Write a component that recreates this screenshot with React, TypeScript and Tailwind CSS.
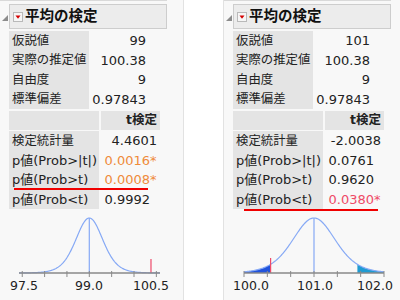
import React from "react";

type PRow = { label: string; value: string; color?: string; star?: boolean };

type ChartProps = {
    mu: number;
    x0: number;
    scale: number;
    se: number;
    axis: [number, number];
    ticks: number[];
    labels: { text: string; x: number }[];
    marker: number;
    markerTop: number;
    shade?: boolean;
};

// t density with 9 df, normalised so the peak is 1
const dens = (z: number) => Math.pow(1 + (z * z) / 9, -5);

function Chart({ mu, x0, scale, se, axis, ticks, labels, marker, markerTop, shade }: ChartProps) {
    const base = 64;
    const H = 55;
    const sigPx = scale * se;
    const yAt = (px: number) => base - H * dens((px - x0) / sigPx);
    const toPx = (v: number) => x0 + (v - mu) * scale;

    const pts: string[] = [];
    for (let px = axis[0]; px <= axis[1]; px += 0.5) {
        pts.push(`${px.toFixed(1)},${yAt(px).toFixed(2)}`);
    }

    const area = (from: number, to: number) => {
        const p: string[] = [`${from},${base}`];
        for (let px = from; px <= to; px += 0.5) p.push(`${px.toFixed(1)},${yAt(px).toFixed(2)}`);
        p.push(`${to},${base}`);
        return p.join(" ");
    };

    const mx = toPx(marker);
    const mirror = x0 + (x0 - mx);

    return (
        <svg width="176" height="91" className="block">
            {shade && (
                <>
                    <polygon points={area(axis[0], mx)} fill="#2153dc" />
                    <polygon points={area(mirror, axis[1])} fill="#1f9bd2" />
                </>
            )}
            <polyline points={pts.join(" ")} fill="none" stroke="#86a9f5" strokeWidth="1.2" />
            <line x1={x0} y1={base - H} x2={x0} y2={base} stroke="#86a9f5" strokeWidth="1.2" />
            <line x1={mx} y1={markerTop} x2={mx} y2={base} stroke="#ee4a6a" strokeWidth="1.2" />
            <line x1={axis[0]} y1={base} x2={axis[1]} y2={base} stroke="#8a8a8a" strokeWidth="1.4" />
            {ticks.map((v) => (
                <line key={v} x1={toPx(v)} y1={base - 2} x2={toPx(v)} y2={base + 4} stroke="#8a8a8a" strokeWidth="1" />
            ))}
            {labels.map((l) => (
                <text
                    key={l.text}
                    x={l.x}
                    y={81}
                    textAnchor="middle"
                    fontSize="12.5"
                    fill="#222"
                    fontFamily="'DejaVu Sans', 'Noto Sans CJK JP', sans-serif"
                >
                    {l.text}
                </text>
            ))}
        </svg>
    );
}

type PanelProps = {
    hyp: string;
    est: string;
    df: string;
    sd: string;
    tval: string;
    pRows: PRow[];
    lineTop: string;
    lineLeft: string;
    chart: ChartProps;
};

function Panel({ hyp, est, df, sd, tval, pRows, lineTop, lineLeft, chart }: PanelProps) {
    const top = [
        ["仮説値", hyp],
        ["実際の推定値", est],
        ["自由度", df],
        ["標準偏差", sd],
    ];

    return (
        <div className="relative flex flex-col">
            <div className="h-[1px] w-[167px] bg-[#d9d9d9]" />

            <div className="mt-[3px] flex h-[25px] items-center">
                <svg width="6" height="6" className="ml-[2px] mt-[2px]">
                    <polygon points="6,0 6,6 0,6" fill="#8c8c8c" />
                </svg>
                <div className="ml-[1px] flex h-[25px] w-[158px] items-center border border-[#cdcdcd] bg-[#ececec]">
                    <svg width="10" height="10" className="ml-[3px]">
                        <rect x="0.5" y="0.5" width="9" height="9" fill="#f6f6f6" stroke="#b9b9b9" />
                        <polygon points="2.5,3.5 7.5,3.5 5,6.8" fill="#d40000" />
                    </svg>
                    <span className="ml-[2px] text-[14.5px] font-bold leading-none text-[#111]">平均の検定</span>
                </div>
            </div>

            <div className="ml-[9px] mt-[2px] flex flex-col">
                {top.map(([l, v]) => (
                    <div key={l} className="flex h-[19.5px]">
                        <div className="flex w-[80px] items-center whitespace-nowrap bg-[#e4e4e4] pl-[3px] text-[12.4px]">
                            {l}
                        </div>
                        <div className="flex w-[60px] items-center justify-end pr-[3px]">{v}</div>
                    </div>
                ))}
            </div>

            <div className="ml-[9px] mt-[2px] flex h-[19px]">
                <div className="w-[90px] bg-[#e4e4e4]" />
                <div className="ml-[2px] flex w-[59px] items-center justify-end bg-[#e4e4e4] pr-[3px] text-[12.5px] font-bold">
                    t検定
                </div>
            </div>

            <div className="ml-[9px] mt-[1px] flex flex-col">
                <div className="flex h-[19.5px]">
                    <div className="flex w-[90px] items-center whitespace-nowrap bg-[#e4e4e4] pl-[3px] text-[12.4px]">
                        検定統計量
                    </div>
                    <div className="ml-[2px] flex w-[59px] items-center justify-end pr-[3px]">{tval}</div>
                </div>
                {pRows.map((r) => (
                    <div key={r.label} className="flex h-[19.5px]">
                        <div className="flex w-[90px] items-center whitespace-nowrap bg-[#e4e4e4] pl-[3px]">
                            {r.label}
                        </div>
                        <div
                            className="ml-[2px] flex w-[59px] items-center justify-end pr-[2px]"
                            style={{ color: r.color ?? "#222" }}
                        >
                            {r.value}
                            <span className="inline-block w-[8px]">{r.star ? "*" : ""}</span>
                        </div>
                    </div>
                ))}
            </div>

            <Chart {...chart} />

            <div className="absolute h-[2px] w-[134px] bg-[#f00000]" style={{ top: lineTop, left: lineLeft }} />
        </div>
    );
}

export default function App() {
    const third = [0, 1, 2, 3, 4, 5, 6].map((i) => 100 + i / 3);

    return (
        <div className="flex h-[300px] w-[400px] overflow-hidden bg-white font-['DejaVu_Sans','Noto_Sans_CJK_JP',sans-serif] text-[13px] leading-none text-[#222]">
            <div className="h-full w-[185px] border-r border-[#e2e2e2] bg-[#f8f8f8]">
                <Panel
                    hyp="99"
                    est="100.38"
                    df="9"
                    sd="0.97843"
                    tval="4.4601"
                    pRows={[
                        { label: "p値(Prob>|t|)", value: "0.0016", color: "#ef8b3b", star: true },
                        { label: "p値(Prob>t)", value: "0.0008", color: "#ef8b3b", star: true },
                        { label: "p値(Prob<t)", value: "0.9992" },
                    ]}
                    lineTop="188px"
                    lineLeft="14px"
                    chart={{
                        mu: 99,
                        x0: 89.3,
                        scale: 44.7,
                        se: 0.30941,
                        axis: [19, 160],
                        ticks: [97.5, 98, 98.5, 99, 99.5, 100, 100.5],
                        labels: [
                            { text: "97.5", x: 24 },
                            { text: "99.0", x: 89 },
                            { text: "100.5", x: 151 },
                        ],
                        marker: 100.38,
                        markerTop: 50,
                    }}
                />
            </div>
            <div className="w-[39px]" />
            <div className="h-full flex-1 border-l border-[#e2e2e2] bg-[#f8f8f8]">
                <Panel
                    hyp="101"
                    est="100.38"
                    df="9"
                    sd="0.97843"
                    tval="-2.0038"
                    pRows={[
                        { label: "p値(Prob>|t|)", value: "0.0761" },
                        { label: "p値(Prob>t)", value: "0.9620" },
                        { label: "p値(Prob<t)", value: "0.0380", color: "#ef4b67", star: true },
                    ]}
                    lineTop="209px"
                    lineLeft="20px"
                    chart={{
                        mu: 101,
                        x0: 90,
                        scale: 70,
                        se: 0.30941,
                        axis: [20, 160],
                        ticks: third,
                        labels: [
                            { text: "100.0", x: 27 },
                            { text: "101.0", x: 91 },
                            { text: "102.0", x: 151 },
                        ],
                        marker: 100.38,
                        markerTop: 49,
                        shade: true,
                    }}
                />
            </div>
        </div>
    );
}
